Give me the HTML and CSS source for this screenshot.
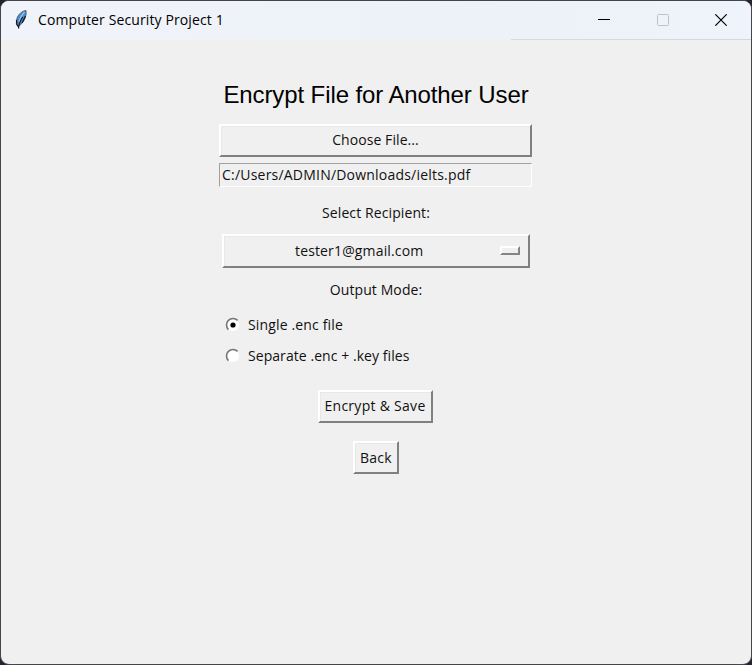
FILE: index.html
```html
<!DOCTYPE html>
<html lang="en">
<head>
<meta charset="utf-8">
<title>Computer Security Project 1</title>
<link rel="stylesheet" href="styles.css">
</head>
<body>
<div class="window">
  <header class="titlebar">
    <svg class="feather" width="14" height="22" viewBox="0 0 14 22">
      <path d="M12 1.5C8 2 4 5.500 2.800 10L2.300 15l2.500 2C9.500 14 12.800 8 12 1.500Z" fill="#4a8bd0" stroke="#5a5e66" stroke-width="1"/>
      <path d="M10.500 3C8.500 5 6 9 5 13" fill="none" stroke="#8cc0f2" stroke-width="1.500"/>
      <path d="M8.800 8C6.500 11 5 14 4.500 19.500M2.500 11l.3 4.500 1.700 2.500M11.500 7L8 14" fill="none" stroke="#17191d" stroke-width="1.200"/>
    </svg>
    <span class="caption">Computer Security Project 1</span>
    <div class="controls">
      <svg width="12" height="12" viewBox="0 0 12 12"><path d="M0 5.500h12" stroke="#000"/></svg>
      <svg width="12" height="12" viewBox="0 0 12 12"><rect x=".5" y=".5" width="11" height="11" rx="1" fill="none" stroke="#bfc1c6"/></svg>
      <svg width="12" height="12" viewBox="0 0 12 12"><path d="M.3.300l11.400 11.400M11.700.300L.3 11.700" stroke="#000" stroke-width="1.200"/></svg>
    </div>
  </header>
  <main class="form">
    <h1>Encrypt File for Another User</h1>
    <button class="button choose"><span class="t-choose">Choose File...</span></button>
    <div class="entry"><span class="t-path">C:/Users/ADMIN/Downloads/ielts.pdf</span></div>
    <div class="label recipient"><span class="t-recipient">Select Recipient:</span></div>
    <button class="button select"><span class="t-mail">tester1@gmail.com</span><i class="indicator"></i></button>
    <div class="label mode"><span class="t-mode">Output Mode:</span></div>
    <div class="options">
      <div class="option">
        <svg width="16" height="16" viewBox="0 0 16 16"><circle cx="8" cy="8" r="6" fill="#fff"/><path d="M3.400 12.600A6.300 6.300 0 0 1 12.600 3.400" fill="none" stroke="#777" stroke-width="1.600"/><circle cx="8" cy="8" r="2.600" fill="#000"/></svg>
        <span class="t-single">Single .enc file</span>
      </div>
      <div class="option">
        <svg width="16" height="16" viewBox="0 0 16 16"><circle cx="8" cy="8" r="6" fill="#fff"/><path d="M3.400 12.600A6.300 6.300 0 0 1 12.600 3.400" fill="none" stroke="#777" stroke-width="1.600"/></svg>
        <span class="t-separate">Separate .enc + .key files</span>
      </div>
    </div>
    <button class="button save"><span class="t-save">Encrypt &amp; Save</span></button>
    <button class="button back"><span class="t-back">Back</span></button>
  </main>
</div>
</body>
</html>
```
FILE: styles.css
```css
* { box-sizing: border-box; }
body {
  margin: 0;
  height: 665px;
  background: #25232e;
  font: 14px/20px "Open Sans", sans-serif;
  color: #111;
  overflow: hidden;
}
.window {
  width: 752px;
  height: 665px;
  border: 1px solid #45434c;
  border-radius: 9px;
  background: #f0f0f0;
  overflow: hidden;
}
.titlebar {
  height: 39px;
  display: flex;
  align-items: center;
  padding: 0 24px 0 13px;
  background:
    linear-gradient(#d5d8dc, #d5d8dc) 510px 38px / 241px 1px no-repeat,
    linear-gradient(90deg, #f1f3fa, #ecf2f8 65%, #eff3fb);
}
.feather { margin-top: -2px; }
.caption { margin: -2px 0 0 10px; white-space: nowrap; color: #000; letter-spacing: 0.12px; }
.controls { margin: -1px 0 0 auto; display: flex; gap: 46.5px; }
.controls svg { display: block; }
.form { display: flex; flex-direction: column; align-items: center; }
.form span { white-space: nowrap; }
h1 {
  margin: 41px 0 0;
  font: 24px/28px "Liberation Sans", sans-serif;
  letter-spacing: -0.1px;
  color: #000;
}
.button {
  display: flex;
  align-items: center;
  justify-content: center;
  padding: 0;
  font: inherit;
  color: inherit;
  background: #f0f0f0;
  border: 2px solid;
  border-color: #fff #808080 #808080 #fff;
  box-shadow: inset 1px 1px #e8e8e8;
}
.choose { margin: 15px 1px 0 0; width: 313px; height: 33px; padding-bottom: 1px; }
.entry {
  margin: 6px 1px 0 0;
  width: 313px;
  height: 24px;
  padding-left: 2px;
  border: 1px solid;
  border-color: #a0a0a0 #fff #fff #a0a0a0;
  line-height: 22px;
}
.label { height: 20px; }
.recipient { margin-top: 16px; }
.select { margin-top: 11px; width: 308px; height: 34px; padding: 0 8px 0 71px; justify-content: space-between; }
.indicator {
  width: 20px;
  height: 9px;
  margin-top: -1px;
  border: 2px solid;
  border-color: #fff #858585 #858585 #fff;
}
.mode { margin-top: 12px; }
.options { width: 302px; margin-top: 15px; display: grid; gap: 11px; }
.option { display: flex; align-items: center; gap: 7px; height: 20px; }
.option svg { margin-top: -1px; }
.save { margin: 24px 2px 0 0; width: 115px; height: 33px; padding-bottom: 1px; }
.back { margin-top: 18px; width: 46px; height: 33px; }

/* Tracking tuned per string */
.t-choose { letter-spacing: 0.08px; }
.t-path { letter-spacing: 0.21px; }
.t-recipient { letter-spacing: 0.1px; }
.t-mail { letter-spacing: 0.15px; }
.t-mode { letter-spacing: 0.1px; }
.t-single { letter-spacing: 0.15px; }
.t-separate { letter-spacing: 0.06px; }
.t-save { letter-spacing: 0.28px; }
.t-back { letter-spacing: 0.25px; }
```
